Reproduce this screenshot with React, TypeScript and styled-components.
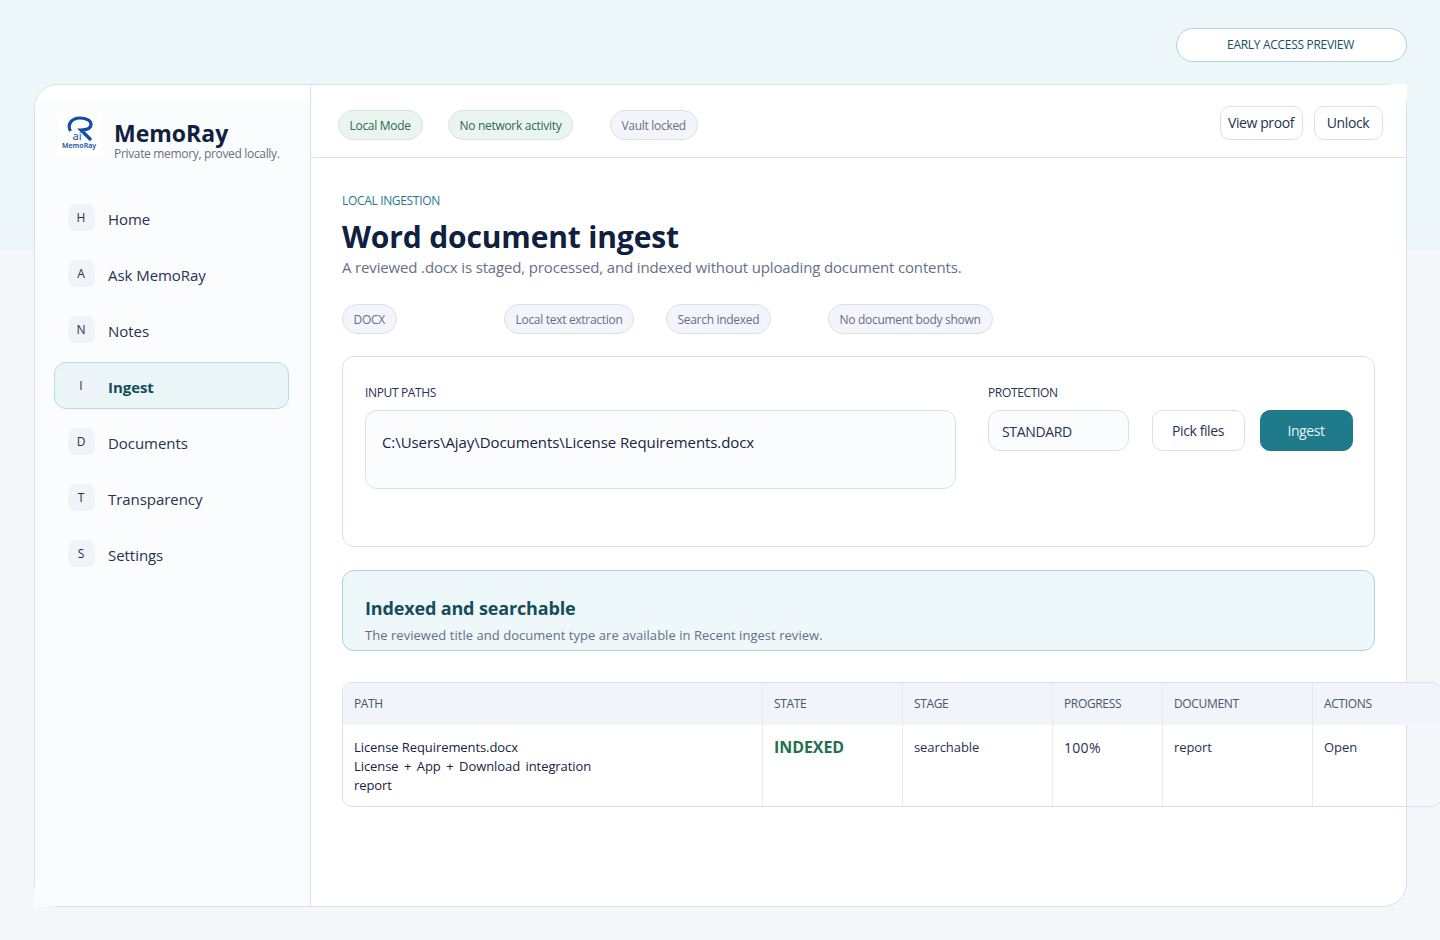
import styled, { createGlobalStyle } from "styled-components";

const GlobalStyle = createGlobalStyle`
  html, body {
    margin: 0;
    padding: 0;
    height: 940px;
    overflow: hidden;
  }
  body {
    background: linear-gradient(#edf6f9 0 251px, #f5f7fb 251px);
    font-family: "Open Sans", "Noto Sans", sans-serif;
    color: #17233f;
  }
  * {
    box-sizing: border-box;
  }
`;

const Page = styled.div`
  width: 1440px;
  height: 940px;
  padding: 28px 33px 33px 34px;
  display: flex;
  flex-direction: column;
`;

const PreviewRow = styled.div`
  display: flex;
  justify-content: flex-end;
  height: 56px;
`;

const PreviewPill = styled.div`
  width: 231px;
  height: 34px;
  padding: 0 2px 1px 0;
  border: 1px solid #a9d4de;
  border-radius: 17px;
  background: #fff;
  color: #17505c;
  font-size: 12px;
  letter-spacing: -0.3px;
  display: flex;
  align-items: center;
  justify-content: center;
`;

const Shell = styled.div`
  flex: 1;
  display: grid;
  grid-template-columns: 275px 1fr;
  background: #fff;
  border: 1px solid #d9e0ec;
  border-radius: 24px;
`;

const Sidebar = styled.aside`
  position: relative;
  margin-top: 17px;
  padding: 11px 21px 0 19px;
  background: #fbfcfe;
  &::after {
    content: "";
    position: absolute;
    left: -1px;
    bottom: -1px;
    width: 14px;
    height: 14px;
    background: #fbfcfe;
  }
`;

const Brand = styled.div`
  display: flex;
  align-items: center;
  gap: 12px;
  margin-left: 4px;
  height: 44px;
`;

const LogoBox = styled.svg`
  width: 44px;
  height: 44px;
  background: #fff;
  flex: none;
`;

const BrandText = styled.div`
  display: flex;
  flex-direction: column;
  margin-top: 10px;
  white-space: nowrap;
`;

const BrandName = styled.div`
  font-size: 23px;
  font-weight: 700;
  line-height: 28px;
  color: #10213f;
`;

const BrandTag = styled.div`
  font-size: 12px;
  line-height: 14px;
  letter-spacing: -0.33px;
  color: #667085;
`;

const Nav = styled.nav`
  display: flex;
  flex-direction: column;
  gap: 9px;
  margin-top: 37px;
`;

const NavItem = styled.div<{ $active?: boolean }>`
  height: 47px;
  display: flex;
  align-items: center;
  gap: 13px;
  padding-left: 13px;
  border: 1px solid ${(p) => (p.$active ? "#b3dde3" : "transparent")};
  border-radius: 12px;
  background: ${(p) => (p.$active ? "#e9f5f6" : "transparent")};
  color: ${(p) => (p.$active ? "#134e5a" : "#27324f")};
  font-size: 15px;
  letter-spacing: -0.05px;
  font-weight: ${(p) => (p.$active ? 700 : 400)};
`;

const NavBadge = styled.span`
  width: 27px;
  height: 27px;
  flex: none;
  padding-right: 1px;
  border-radius: 8px;
  background: #f0f3f8;
  color: #27324f;
  font-size: 12px;
  font-weight: 400;
  display: flex;
  align-items: center;
  justify-content: center;
  margin-top: -1px;
`;

const NavLabel = styled.span`
  padding-top: 2px;
`;

const Main = styled.main`
  position: relative;
  border-left: 1px solid #d9e0ec;
  min-width: 0;
  &::after {
    content: "";
    position: absolute;
    right: -1px;
    top: -1px;
    width: 14px;
    height: 14px;
    background: #fff;
  }
`;

const TopBar = styled.header`
  height: 73px;
  background: #fff;
  border-bottom: 1px solid #d9e0ec;
  padding: 0 23px 0 27px;
  display: flex;
  align-items: center;
  justify-content: space-between;
`;

const TopChips = styled.div`
  display: grid;
  grid-template-columns: 110px 162px auto;
  justify-items: start;
  margin-top: 8px;
`;

const Chip = styled.span<{ $tone?: "green" | "grey" }>`
  height: 30px;
  padding: 0 11px 0 10.5px;
  display: inline-flex;
  align-items: center;
  white-space: nowrap;
  border: 1px solid #d9e0ec;
  border-radius: 15px;
  font-size: 12px;
  letter-spacing: -0.3px;
  background: ${(p) => (p.$tone === "green" ? "#ebf5f0" : "#f3f5fa")};
  color: ${(p) => (p.$tone === "green" ? "#2a6b4f" : "#667085")};
`;

const TopActions = styled.div`
  display: flex;
  gap: 11px;
  margin-top: 4px;
`;

const Button = styled.button<{ $primary?: boolean; $h?: number; $w?: number }>`
  height: ${(p) => p.$h ?? 34}px;
  width: ${(p) => (p.$w ? `${p.$w}px` : "auto")};
  padding: 0 1px ${(p) => (p.$h ? 0 : 2)}px 0;
  border: 1px solid ${(p) => (p.$primary ? "#1f7a8c" : "#d9e0ec")};
  border-radius: 10px;
  background: ${(p) => (p.$primary ? "#1f7a8c" : "#fff")};
  color: ${(p) => (p.$primary ? "#e6f2f4" : "#27324f")};
  font-family: inherit;
  font-size: 14px;
  letter-spacing: -0.4px;
`;

const Content = styled.div`
  padding: 36px 0 0 31px;
`;

const Eyebrow = styled.div`
  font-size: 12px;
  line-height: 14px;
  letter-spacing: -0.33px;
  color: #1f7a8c;
`;

const Title = styled.h1`
  margin: 7px 0 0;
  font-size: 30px;
  line-height: 43px;
  letter-spacing: -0.15px;
  font-weight: 700;
  color: #10213f;
`;

const Lead = styled.p`
  margin: 0;
  font-size: 15px;
  line-height: 19px;
  letter-spacing: -0.15px;
  color: #667085;
`;

const DocChips = styled.div`
  display: grid;
  grid-template-columns: repeat(4, 162px);
  justify-items: start;
  margin-top: 27px;
`;

const Panel = styled.section`
  width: 1033px;
  height: 191px;
  margin-top: 22px;
  padding: 29px 22px 0;
  border: 1px solid #d9e0ec;
  border-radius: 12px;
  display: flex;
`;

const PathsColumn = styled.div`
  width: 591px;
  margin-right: 32px;
  flex: none;
`;

const FieldLabel = styled.div`
  font-size: 12px;
  line-height: 14px;
  letter-spacing: -0.35px;
  color: #27324f;
  margin-bottom: 10px;
`;

const PathsBox = styled.div`
  height: 79px;
  padding: 21px 16px 0;
  border: 1px solid #d9e0ec;
  border-radius: 12px;
  background: #fbfcfe;
  font-size: 15px;
  line-height: 21px;
  letter-spacing: -0.08px;
  color: #17233f;
`;

const ProtectionColumn = styled.div`
  width: 141px;
  margin-right: 23px;
  flex: none;
`;

const SelectBox = styled.div`
  height: 41px;
  padding: 2px 0 0 13px;
  display: flex;
  align-items: center;
  border: 1px solid #d9e0ec;
  border-radius: 12px;
  background: #fbfcfe;
  font-size: 14px;
  letter-spacing: -0.35px;
  color: #27324f;
`;

const PanelActions = styled.div`
  display: flex;
  gap: 15px;
  margin-top: 24px;
`;

const StatusCard = styled.section`
  width: 1033px;
  height: 81px;
  margin-top: 23px;
  padding: 25px 22px 0;
  border: 1px solid #a9d4de;
  border-radius: 12px;
  background: #eef7fa;
  overflow: hidden;
`;

const StatusTitle = styled.div`
  font-size: 18px;
  line-height: 24px;
  letter-spacing: -0.15px;
  font-weight: 700;
  color: #134e5a;
`;

const StatusText = styled.div`
  margin-top: 6px;
  font-size: 13px;
  line-height: 18px;
  letter-spacing: 0.04px;
  color: #667085;
`;

const TableWrap = styled.div`
  width: 1100px;
  margin-top: 31px;
  border: 1px solid #d9e0ec;
  border-radius: 10px;
  overflow: hidden;
`;

const Table = styled.table`
  width: 100%;
  table-layout: fixed;
  border-collapse: collapse;
`;

const Th = styled.th<{ $w: number }>`
  width: ${(p) => p.$w}px;
  height: 42px;
  padding: 0 11px 2px 11.5px;
  background: #f1f4f8;
  border-left: 1px solid #e6eaf2;
  font-size: 12px;
  font-weight: 400;
  letter-spacing: -0.35px;
  text-align: left;
  color: #4a5570;
  &:first-child {
    border-left: 0;
    padding-left: 11px;
  }
`;

const Td = styled.td`
  height: 81px;
  padding: 13px 11px 0 11.5px;
  vertical-align: top;
  border-left: 1px solid #e6eaf2;
  font-size: 13px;
  line-height: 19px;
  letter-spacing: -0.08px;
  color: #27324f;
  &:first-child {
    border-left: 0;
    padding-left: 11px;
    color: #17233f;
  }
`;

const WideWords = styled.span`
  word-spacing: 2.2px;
`;

const StateText = styled.span`
  font-size: 16px;
  font-weight: 700;
  color: #23704f;
`;

const Percent = styled.span`
  font-size: 14px;
  letter-spacing: 0.3px;
`;

const navItems = [
  { key: "H", label: "Home" },
  { key: "A", label: "Ask MemoRay" },
  { key: "N", label: "Notes" },
  { key: "I", label: "Ingest", active: true },
  { key: "D", label: "Documents" },
  { key: "T", label: "Transparency" },
  { key: "S", label: "Settings" },
];

const columns = [
  { name: "PATH", w: 419 },
  { name: "STATE", w: 140 },
  { name: "STAGE", w: 150 },
  { name: "PROGRESS", w: 110 },
  { name: "DOCUMENT", w: 150 },
  { name: "ACTIONS", w: 129 },
];

const Logo = () => (
  <LogoBox viewBox="0 0 44 44">
    <path
      d="M12.5 18 C9 12 13 5 22 5 C29 5 33.5 8 33 12 C32.5 15.5 28 17 23 17 L33 27"
      fill="none"
      stroke="#0d4ea6"
      strokeWidth="3.2"
    />
    <text x="14.5" y="27" fontSize="11" fontFamily="Noto Sans" fill="#0d4ea6">
      ai
    </text>
    <text x="4" y="34.5" fontSize="7" fontWeight="600" fontFamily="Noto Sans" fill="#0d4ea6">
      MemoRay
    </text>
  </LogoBox>
);

export default function App() {
  return (
    <>
      <GlobalStyle />
      <Page>
        <PreviewRow>
          <PreviewPill>EARLY ACCESS PREVIEW</PreviewPill>
        </PreviewRow>
        <Shell>
          <Sidebar>
            <Brand>
              <Logo />
              <BrandText>
                <BrandName>MemoRay</BrandName>
                <BrandTag>Private memory, proved locally.</BrandTag>
              </BrandText>
            </Brand>
            <Nav>
              {navItems.map((item) => (
                <NavItem key={item.key} $active={item.active}>
                  <NavBadge>{item.key}</NavBadge>
                  <NavLabel>{item.label}</NavLabel>
                </NavItem>
              ))}
            </Nav>
          </Sidebar>
          <Main>
            <TopBar>
              <TopChips>
                <Chip $tone="green">Local Mode</Chip>
                <Chip $tone="green">No network activity</Chip>
                <Chip>Vault locked</Chip>
              </TopChips>
              <TopActions>
                <Button $w={83}>View proof</Button>
                <Button $w={69}>Unlock</Button>
              </TopActions>
            </TopBar>
            <Content>
              <Eyebrow>LOCAL INGESTION</Eyebrow>
              <Title>Word document ingest</Title>
              <Lead>A reviewed .docx is staged, processed, and indexed without uploading document contents.</Lead>
              <DocChips>
                <Chip>DOCX</Chip>
                <Chip>Local text extraction</Chip>
                <Chip>Search indexed</Chip>
                <Chip>No document body shown</Chip>
              </DocChips>
              <Panel>
                <PathsColumn>
                  <FieldLabel>INPUT PATHS</FieldLabel>
                  <PathsBox>C:\Users\Ajay\Documents\License Requirements.docx</PathsBox>
                </PathsColumn>
                <ProtectionColumn>
                  <FieldLabel>PROTECTION</FieldLabel>
                  <SelectBox>STANDARD</SelectBox>
                </ProtectionColumn>
                <PanelActions>
                  <Button $w={93} $h={41}>Pick files</Button>
                  <Button $w={93} $h={41} $primary>Ingest</Button>
                </PanelActions>
              </Panel>
              <StatusCard>
                <StatusTitle>Indexed and searchable</StatusTitle>
                <StatusText>The reviewed title and document type are available in Recent ingest review.</StatusText>
              </StatusCard>
              <TableWrap>
                <Table>
                  <thead>
                    <tr>
                      {columns.map((c) => (
                        <Th key={c.name} $w={c.w}>{c.name}</Th>
                      ))}
                    </tr>
                  </thead>
                  <tbody>
                    <tr>
                      <Td>
                        License Requirements.docx
                        <br />
                        <WideWords>License + App + Download integration</WideWords>
                        <br />
                        report
                      </Td>
                      <Td><StateText>INDEXED</StateText></Td>
                      <Td>searchable</Td>
                      <Td><Percent>100%</Percent></Td>
                      <Td>report</Td>
                      <Td>Open</Td>
                    </tr>
                  </tbody>
                </Table>
              </TableWrap>
            </Content>
          </Main>
        </Shell>
      </Page>
    </>
  );
}
